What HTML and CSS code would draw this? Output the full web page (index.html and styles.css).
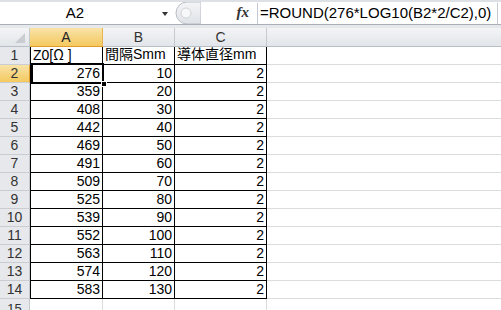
FILE: index.html
```html
<!DOCTYPE html>
<html>
<head>
<meta charset="utf-8">
<link rel="stylesheet" href="styles.css">
</head>
<body>
<div class="app">
  <div class="fbar">
    <div class="namebox"><span class="name">A2</span><span class="caret"></span></div>
    <div class="knob">
      <svg width="28" height="22" viewBox="0 0 28 22">
        <defs>
          <linearGradient id="kg" x1="0" y1="0" x2="0" y2="1">
            <stop offset="0" stop-color="#f4f5f7"/>
            <stop offset="1" stop-color="#dfe2e6"/>
          </linearGradient>
        </defs>
        <path d="M28 0 L14 0 A11 11 0 0 0 14 22 L28 22 Z" fill="url(#kg)" stroke="#b9bec5" stroke-width="1"/>
        <circle cx="13" cy="11" r="5" fill="#f7f8fa" stroke="#d0d4d9" stroke-width="1"/>
      </svg>
    </div>
    <div class="fx">fx</div>
    <div class="formula">=ROUND(276*LOG10(B2*2/C2),0)</div>
  </div>
  <div class="band"></div>
  <div class="sheet">
    <div class="corner"><span class="tri"></span></div>
    <div class="ch sel">A</div>
    <div class="ch">B</div>
    <div class="ch">C</div>
    <div class="ch last"></div>

    <div class="rh">1</div>
    <div class="c a l">Z0[<span class="cjk">Ω</span> ]</div>
    <div class="c b l">間隔Smm</div>
    <div class="c b l">導体直径mm</div>
    <div class="c e"></div>

    <div class="rh sel">2</div>
    <div class="c a active">276<span class="selbox"><span class="handle"></span></span></div>
    <div class="c b">10</div>
    <div class="c b">2</div>
    <div class="c e"></div>

    <div class="rh">3</div><div class="c a">359</div><div class="c b">20</div><div class="c b">2</div><div class="c e"></div>
    <div class="rh">4</div><div class="c a">408</div><div class="c b">30</div><div class="c b">2</div><div class="c e"></div>
    <div class="rh">5</div><div class="c a">442</div><div class="c b">40</div><div class="c b">2</div><div class="c e"></div>
    <div class="rh">6</div><div class="c a">469</div><div class="c b">50</div><div class="c b">2</div><div class="c e"></div>
    <div class="rh">7</div><div class="c a">491</div><div class="c b">60</div><div class="c b">2</div><div class="c e"></div>
    <div class="rh">8</div><div class="c a">509</div><div class="c b">70</div><div class="c b">2</div><div class="c e"></div>
    <div class="rh">9</div><div class="c a">525</div><div class="c b">80</div><div class="c b">2</div><div class="c e"></div>
    <div class="rh">10</div><div class="c a">539</div><div class="c b">90</div><div class="c b">2</div><div class="c e"></div>
    <div class="rh">11</div><div class="c a">552</div><div class="c b">100</div><div class="c b">2</div><div class="c e"></div>
    <div class="rh">12</div><div class="c a">563</div><div class="c b">110</div><div class="c b">2</div><div class="c e"></div>
    <div class="rh">13</div><div class="c a">574</div><div class="c b">120</div><div class="c b">2</div><div class="c e"></div>
    <div class="rh">14</div><div class="c a">583</div><div class="c b">130</div><div class="c b">2</div><div class="c e"></div>
    <div class="rh last">15</div><div class="c g"></div><div class="c g"></div><div class="c g"></div><div class="c e"></div>
  </div>
</div>
</body>
</html>
```

FILE: styles.css
```css
* { box-sizing: border-box; }
html, body { margin: 0; padding: 0; background: #fff; }
body {
  width: 501px;
  height: 310px;
  overflow: hidden;
  font-family: "Liberation Sans", "Noto Sans CJK JP", sans-serif;
  font-size: 14px;
  color: #000;
}
.app { width: 501px; }

.fbar {
  height: 25px;
  display: flex;
  background: #fff;
  border-top: 2px solid #dde1e6;
  border-bottom: 1px solid #a9b0b9;
}
.namebox {
  width: 173px;
  display: flex;
  align-items: center;
}
.name {
  width: 150px;
  text-align: center;
  font-size: 15px;
  line-height: 20px;
}
.caret {
  margin-left: 12px;
  width: 0; height: 0;
  border-left: 3.5px solid transparent;
  border-right: 3.5px solid transparent;
  border-top: 4px solid #333;
  margin-top: 2px;
}
.knob { width: 28px; height: 22px; }
.knob svg { display: block; }
.fx {
  width: 56px;
  text-align: right;
  padding-right: 8px;
  font-family: "Liberation Serif", serif;
  font-style: italic;
  font-weight: bold;
  font-size: 15px;
  line-height: 21px;
  color: #333;
}
.formula {
  flex: 1;
  margin: 1px 3px 0 0;
  height: 21px;
  border-left: 1px solid #c5cad1;
  border-right: 1px solid #c5cad1;
  padding-left: 2px;
  font-size: 15px;
  line-height: 20px;
  white-space: nowrap;
}

.band { height: 3px; background: #e6e8eb; }

.sheet {
  display: grid;
  grid-template-columns: 30px 73px 72px 92px 1fr;
  grid-template-rows: 19px repeat(15, 18px);
}
.corner, .ch {
  background: linear-gradient(#f3f4f6, #e2e5e9);
  border-right: 1px solid #c6cacf;
  border-bottom: 1px solid #b9bec4;
  color: #333;
  text-align: center;
  font-size: 14px;
  line-height: 18px;
}
.corner { position: relative; }
.tri {
  position: absolute;
  right: 4px;
  bottom: 3px;
  width: 0; height: 0;
  border-left: 10px solid transparent;
  border-bottom: 10px solid #c9ccd0;
}
.ch.last { border-right: none; }
.ch.sel {
  background: linear-gradient(#f9e3a8, #f4c95f);
  border-right: 1px solid #e9b554;
  border-bottom: 1px solid #e39a29;
  color: #222;
}
.rh {
  background: #e6e8eb;
  border-right: 1px solid #c6cacf;
  border-bottom: 1px solid #c9ccd1;
  color: #333;
  text-align: center;
  font-size: 14px;
  line-height: 17px;
}
.rh.last { line-height: 19px; font-size: 13px; }
.rh.sel {
  background: linear-gradient(#f9e3a8, #f4c95f);
  border-right: 1px solid #e39a29;
}
.c {
  border-right: 1px solid #dadcdd;
  border-bottom: 1px solid #dadcdd;
  font-size: 14px;
  line-height: 17px;
  text-align: right;
  padding-right: 2px;
  white-space: nowrap;
}
.c.a {
  border-left: 1px solid #000;
  border-right: 1px solid #000;
  border-bottom: 1px solid #000;
}
.c.b {
  border-right: 1px solid #000;
  border-bottom: 1px solid #000;
}
.c.g { border-right: 1px solid #dadcdd; }
.c.e { border-right: none; }
.c.l {
  text-align: left;
  padding-left: 2px;
  padding-right: 0;
  font-size: 14px;
  line-height: 15px;
}
.cjk { font-family: "Noto Sans CJK JP", sans-serif; }
.c.active { position: relative; }
.selbox {
  position: absolute;
  left: 0px;
  top: -2px;
  right: -2px;
  bottom: -2px;
  border: 2px solid #000;
}
.handle {
  position: absolute;
  right: -5px;
  bottom: -5px;
  width: 6px;
  height: 6px;
  background: #000;
  border: 1px solid #fff;
}
```
